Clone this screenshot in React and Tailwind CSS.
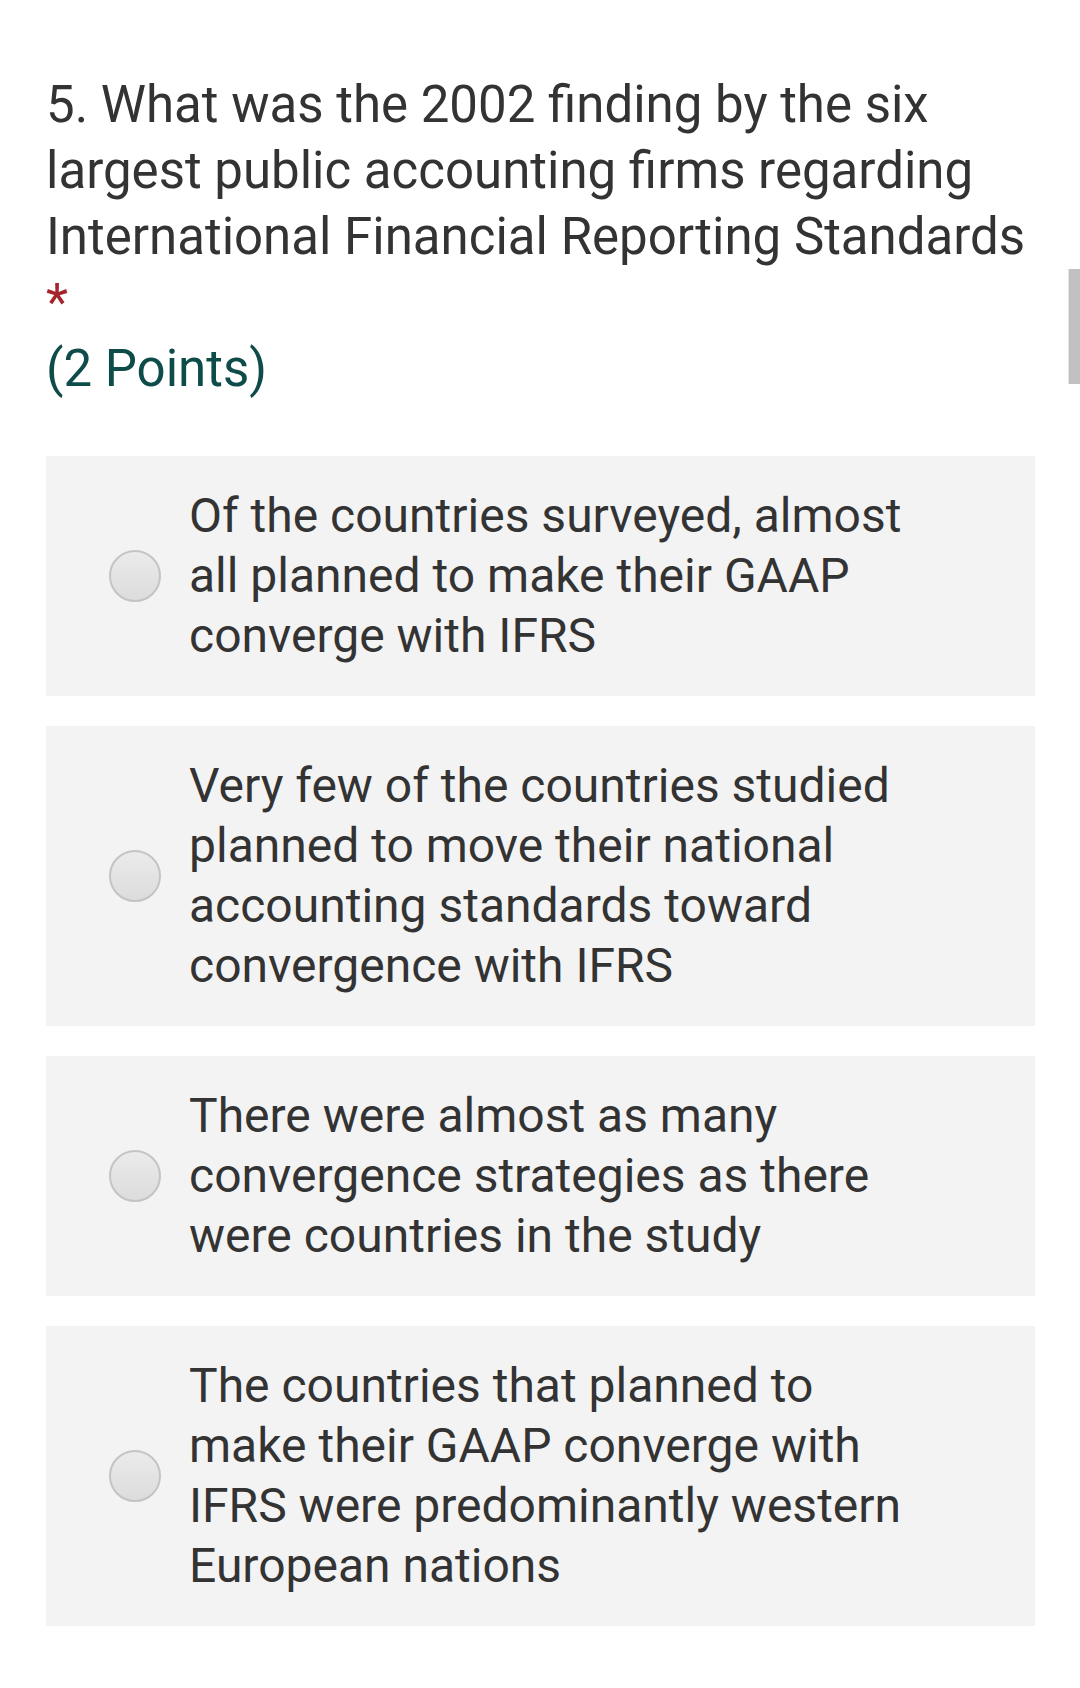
import React from 'react'

const options = [
    'Of the countries surveyed, almost all planned to make their GAAP converge with IFRS',
    'Very few of the countries studied planned to move their national accounting standards toward convergence with IFRS',
    'There were almost as many convergence strategies as there were countries in the study',
    'The countries that planned to make their GAAP converge with IFRS were predominantly western European nations',
]

function Radio() {
    return (
        <span className="shrink-0 w-[52px] h-[52px] rounded-full border-2 border-[#c4c4c4] bg-gradient-to-b from-[#ebebeb] to-[#dcdcdc]" />
    )
}

export default function App() {
    return (
        <div className="relative w-[1080px] h-[1688px] bg-white overflow-hidden" style={{ fontFamily: 'Roboto, "Noto Sans", sans-serif' }}>
            {/* scrollbar */}
            <div className="absolute right-0 top-[269px] w-[12px] h-[115px] bg-[#c1c1c1] border-l border-[#e5e5e5]" />

            <div className="pl-[46px] pr-[45px] pt-[72px]">
                {/* Question */}
                <div className="text-[#333333] text-[51px] leading-[66px]">
                    5. What was the 2002 finding by the six largest public accounting firms regarding International Financial Reporting Standards
                </div>
                <div className="text-[#a4262c] text-[51px] leading-[66px]">*</div>
                <div className="text-[#0d4c48] text-[51px] leading-[66px]">(2 Points)</div>

                {/* Options */}
                <div className="mt-[54px] flex flex-col gap-[30px]">
                    {options.map((text, i) => (
                        <div key={i} className="flex items-center bg-[#f3f3f3] pl-[63px] pr-[100px] py-[30px]">
                            <Radio />
                            <div className="ml-[28px] text-[#333333] text-[48px] leading-[60px]">{text}</div>
                        </div>
                    ))}
                </div>
            </div>
        </div>
    )
}
